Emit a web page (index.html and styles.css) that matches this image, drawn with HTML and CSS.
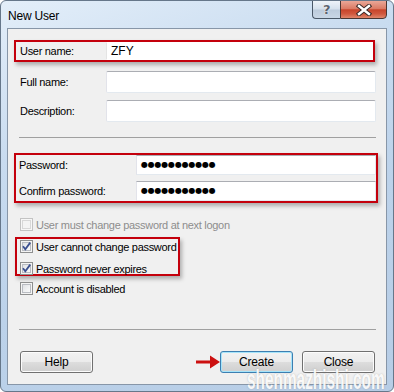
FILE: index.html
```html
<!DOCTYPE html>
<html>
<head>
<meta charset="utf-8">
<title>New User</title>
<link rel="stylesheet" href="styles.css">
</head>
<body>
<div class="window">
  <div class="titlebar">
    <span class="title">New User</span>
  </div>
  <div class="caption">
    <div class="cap-help"><span>?</span></div>
    <div class="cap-close">
      <svg width="16" height="12" viewBox="0 0 16 12">
        <path d="M3 2 L13 10 M13 2 L3 10" stroke="#3a2a28" stroke-width="4.4" stroke-linecap="square" fill="none"/>
        <path d="M3 2 L13 10 M13 2 L3 10" stroke="#ffffff" stroke-width="2.4" stroke-linecap="square" fill="none"/>
      </svg>
    </div>
  </div>
  <div class="client">
    <div class="hl user-box">
      <span class="lbl lbl-w">User name:</span>
      <div class="tb tb-in">ZFY</div>
    </div>
    <div class="row row-full">
      <span class="lbl lbl-w">Full name:</span>
      <div class="tb"></div>
    </div>
    <div class="row row-desc">
      <span class="lbl lbl-w">Description:</span>
      <div class="tb"></div>
    </div>
    <div class="sep sep1"></div>
    <div class="hl pw-box">
      <div class="pw-row">
        <span class="lbl lbl-pw">Password:</span>
        <div class="tb tb-pw"><span class="dots">●●●●●●●●●●●</span></div>
      </div>
      <div class="pw-row">
        <span class="lbl lbl-pw">Confirm password:</span>
        <div class="tb tb-pw"><span class="dots">●●●●●●●●●●●</span></div>
      </div>
    </div>
    <div class="cb-row cb-first disabled">
      <span class="cb"></span>
      <span>User must change password at next logon</span>
    </div>
    <div class="hl cb-box">
      <div class="cb-row">
        <span class="cb"><svg class="chk" width="11" height="11" viewBox="0 0 11 11"><path d="M2 5.2 L4.3 8.2 L9.2 1.6" stroke="#3a4f8f" stroke-width="1.8" fill="none"/></svg></span>
        <span>User cannot change password</span>
      </div>
      <div class="cb-row cb-second">
        <span class="cb"><svg class="chk" width="11" height="11" viewBox="0 0 11 11"><path d="M2 5.2 L4.3 8.2 L9.2 1.6" stroke="#3a4f8f" stroke-width="1.8" fill="none"/></svg></span>
        <span>Password never expires</span>
      </div>
    </div>
    <div class="cb-row cb-last">
      <span class="cb"></span>
      <span>Account is disabled</span>
    </div>
    <div class="sep sep2"></div>
    <div class="btn-row">
      <button class="btn">Help</button>
      <svg class="arrow" width="24" height="16" viewBox="0 0 24 16">
        <path d="M0 6.5 H14 V1.5 L24 8 L14 14.5 V9.5 H0 Z" fill="#cc1010"/>
      </svg>
      <button class="btn btn-default">Create</button>
      <button class="btn">Close</button>
    </div>
  </div>
  <div class="watermark">shenmazhishi.com</div>
</div>
</body>
</html>
```

FILE: styles.css
```css
html, body {
  margin: 0;
  padding: 0;
  background: #ffffff;
}

.window {
  position: relative;
  width: 394px;
  height: 392px;
  box-sizing: border-box;
  border: 1px solid #66778a;
  border-radius: 6px;
  background: linear-gradient(160deg, #e3eef9 0%, #c9dcf0 30%, #bcd2ea 60%, #b7cde6 100%);
  display: flex;
  flex-direction: column;
  font-family: "Liberation Sans", Arial, sans-serif;
  font-size: 11px;
  letter-spacing: -0.3px;
  color: #000;
  overflow: hidden;
}

.titlebar {
  height: 27px;
  box-sizing: border-box;
  padding: 3px 0 0 7px;
  display: flex;
  align-items: center;
}

.title {
  font-size: 12px;
  letter-spacing: -0.2px;
  color: #000;
}

.caption {
  position: absolute;
  top: -1px;
  right: 6px;
  display: flex;
  height: 19px;
}

.cap-help {
  width: 28px;
  height: 19px;
  box-sizing: border-box;
  border: 1px solid #4a5868;
  border-right: none;
  border-radius: 0 0 0 4px;
  background: linear-gradient(#eef3f9 0%, #d5e0ec 48%, #bccbdc 52%, #c9d7e6 100%);
  display: flex;
  align-items: center;
  justify-content: center;
}

.cap-help span {
  font-family: "DejaVu Sans", sans-serif;
  font-weight: bold;
  font-size: 13px;
  color: #5b6470;
  text-shadow: 0 0 1px #fff, 0 0 1px #fff;
  line-height: 1;
}

.cap-close {
  width: 47px;
  height: 19px;
  box-sizing: border-box;
  border: 1px solid #4a3632;
  border-radius: 0 0 4px 0;
  background: linear-gradient(#eaa797 0%, #db7b65 45%, #c8452b 52%, #d0573d 75%, #e0866b 100%);
  display: flex;
  align-items: center;
  justify-content: center;
}

.client {
  flex: 1;
  margin: 0 6px 6px;
  border: 1px solid #8796a8;
  background: #f0f0f0;
  padding: 11px 8px 0 6px;
  display: flex;
  flex-direction: column;
}

.hl {
  border: 2px solid #c4000c;
  box-shadow: 2px 3px 4px rgba(0, 0, 0, 0.28);
  box-sizing: border-box;
}

.lbl {
  flex: none;
  white-space: nowrap;
}

.lbl-w {
  width: 86px;
}

.lbl-pw {
  width: 117px;
}

.user-box {
  display: flex;
  align-items: center;
  height: 22px;
  margin-right: 3px;
  padding-left: 4px;
}

.tb {
  flex: 1;
  height: 22px;
  box-sizing: border-box;
  border: 1px solid;
  border-color: #abadb3 #e3e9ef #e3e9ef #e2e3ea;
  border-radius: 2px;
  background: #fff;
  display: flex;
  align-items: center;
  padding-left: 4px;
}

.tb-in {
  height: 18px;
  border-color: #ffffff #ffffff #ffffff #e4e4e4;
  border-radius: 0;
  font-size: 12px;
  letter-spacing: 0;
}

.row {
  display: flex;
  align-items: center;
  margin-left: 6px;
  margin-right: 2px;
}

.row-full {
  margin-top: 9px;
}

.row-desc {
  margin-top: 7px;
}

.sep {
  height: 0;
  border-top: 1px solid #a0a0a0;
  margin-left: 5px;
  margin-right: 2px;
}

.sep1 {
  margin-top: 15px;
}

.sep2 {
  margin-top: 34px;
}

.pw-box {
  margin-top: 15px;
  height: 50px;
  padding-left: 3px;
  display: flex;
  flex-direction: column;
  gap: 6px;
}

.pw-row {
  display: flex;
  align-items: center;
  height: 20px;
}

.tb-pw {
  height: 20px;
  border-radius: 0;
  padding-left: 4px;
}

.dots {
  font-family: "DejaVu Sans", sans-serif;
  font-size: 8px;
  letter-spacing: -0.2px;
  line-height: 1;
}

.cb-row {
  display: flex;
  align-items: center;
  gap: 3px;
  height: 13px;
  margin-left: 6px;
  white-space: nowrap;
}

.cb-first {
  margin-top: 15px;
}

.disabled {
  color: #8d8d8d;
}

.cb {
  flex: none;
  width: 13px;
  height: 13px;
  box-sizing: border-box;
  border: 1px solid #8e8f8f;
  background: linear-gradient(135deg, #d8dade 0%, #f2f3f4 60%, #ffffff 100%);
  box-shadow: inset 0 0 0 1px #f4f4f4, inset 0 0 0 2px #b9bcc2;
  position: relative;
}

.disabled .cb {
  border-color: #c3c3c3;
  background: #f4f4f4;
  box-shadow: inset 0 0 0 1px #f7f7f7, inset 0 0 0 2px #d8d8d8;
}

.chk {
  position: absolute;
  left: 0;
  top: 0;
}

.cb-box {
  margin-top: 6px;
  margin-left: 1px;
  width: 165px;
  height: 39px;
  padding: 1px 0 0 3px;
  display: flex;
  flex-direction: column;
  gap: 9px;
}

.cb-box .cb-row {
  margin-left: 0;
}

.cb-last {
  margin-top: 6px;
}

.btn-row {
  display: flex;
  align-items: center;
  margin-top: 21px;
  margin-left: 6px;
  margin-right: 3px;
}

.btn {
  width: 73px;
  height: 22px;
  box-sizing: border-box;
  border: 1px solid #707070;
  border-radius: 3px;
  background: linear-gradient(#f2f2f2 0%, #ebebeb 50%, #dddddd 50%, #cfcfcf 100%);
  box-shadow: inset 0 0 0 1px #fcfcfc;
  font-family: "Liberation Sans", Arial, sans-serif;
  font-size: 12px;
  letter-spacing: -0.2px;
  color: #000;
  padding: 0;
  margin: 0;
}

.btn-default {
  border-color: #3c7fb1;
  box-shadow: inset 0 0 0 1px #a6e4fa;
}

.arrow {
  margin-left: auto;
  flex: none;
}

.btn-default + .btn {
  margin-left: 9px;
}

.watermark {
  position: absolute;
  left: 246px;
  top: 366px;
  font-family: "Liberation Sans", Arial, sans-serif;
  font-weight: bold;
  font-size: 27px;
  letter-spacing: 0;
  color: rgba(255, 255, 255, 0.92);
  text-shadow: 0 0 2px rgba(120, 120, 120, 0.5);
  transform: scaleX(0.57);
  transform-origin: left top;
  white-space: nowrap;
  line-height: 1;
}
```
